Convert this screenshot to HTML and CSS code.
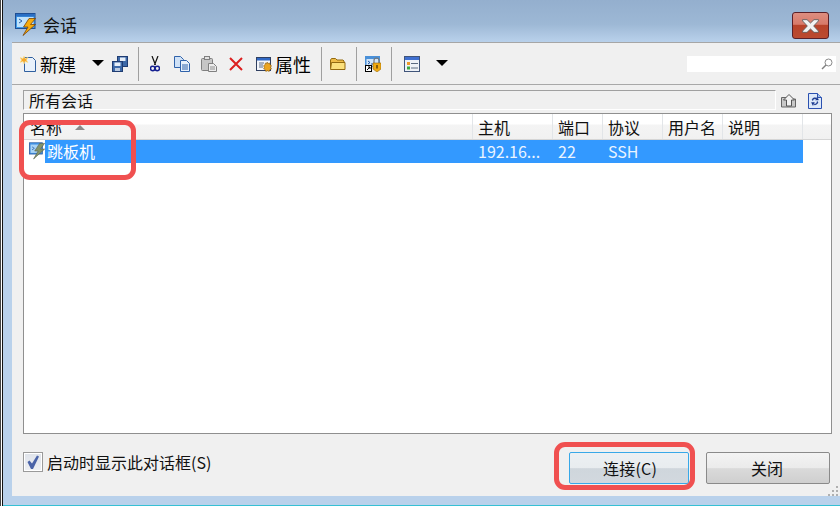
FILE: index.html
```html
<!DOCTYPE html>
<html lang="zh-CN">
<head>
<meta charset="utf-8">
<title>会话</title>
<link rel="stylesheet" href="styles.css">
</head>
<body>
<svg class="defs" width="0" height="0" aria-hidden="true">
  <defs>
    <symbol id="term" viewBox="0 0 21 23">
      <rect x="0.5" y="0.5" width="19.500" height="15" fill="#3f9be8" stroke="#1f4f94"/>
      <rect x="1" y="1" width="18.500" height="2.500" fill="#2a6fc4"/>
      <rect x="2" y="4" width="16.500" height="10" fill="#bfe2fb"/>
      <path d="M4 6l3 2-3 2" fill="none" stroke="#2a5fa8"/>
      <path d="M20.500 5.500H14L8.500 14H13L8 22.500 20.500 11.500H15.500z" fill="#f6ab0c" stroke="#7a4204" stroke-width=".8"/>
    </symbol>
    <symbol id="term-sel" viewBox="0 0 21 23">
      <rect x="0.5" y="0.5" width="17" height="15" fill="#3f8fe0" stroke="#2a5a9c"/>
      <rect x="2" y="3" width="14" height="11" fill="#a9d4f6"/>
      <path d="M4 6l3 2-3 2" fill="none" stroke="#2a5fa8"/>
      <path d="M20.500 1.500H14L7.500 11.500H12L6 22 20.500 9H15z" fill="#84946a" stroke="#55604a" stroke-width=".8"/>
    </symbol>
  </defs>
</svg>
<div class="screen">
  <div class="edge"></div>
  <div class="window">
    <header class="titlebar">
      <svg class="app-icon" width="21" height="23"><use href="#term"/></svg>
      <span class="title">会话</span>
      <button class="win-close" aria-label="关闭">
        <svg width="19" height="16" viewBox="0 0 18 14"><path d="M1.500 1h4.200L9 4.200 12.300 1h4.200v1.200L12 7l4.500 4.800V13h-4.200L9 9.800 5.700 13H1.500v-1.200L6 7 1.500 2.200z" fill="#f2f2f2" stroke="#5a5a5a" stroke-width=".8"/></svg>
      </button>
    </header>
    <main class="client">
      <div class="toolbar">
        <svg class="ico i-new" width="16" height="16" viewBox="0 0 16 16"><path d="M4.500 1.500h8l3 3v11h-11z" fill="#e8f1fb" stroke="#2f5f9f"/><path d="M4 0l1 2.500L8 1.500 6.500 4 8 6.500 5 5.500 4 8 3 5.500 0 6.500 1.500 4 0 1.500l3 1z" fill="#f7a82a" stroke="#fbe79a" stroke-width=".6"/></svg>
        <span class="tb-label">新建</span>
        <span class="tb-arrow a-new"></span>
        <svg class="ico i-save" width="16" height="16" viewBox="0 0 16 16"><rect x="5.500" y=".5" width="10" height="10" fill="#3d69a8" stroke="#1f3c72"/><rect x="8" y="1.500" width="5.500" height="3.500" fill="#e6eef8"/><rect x=".5" y="5.500" width="10" height="10" fill="#3d69a8" stroke="#1f3c72"/><rect x="2.500" y="6.500" width="6" height="3.500" fill="#e6eef8"/><rect x="3" y="12" width="5" height="3" fill="#b9c9e0"/></svg>
        <span class="tb-sep s-1"></span>
        <svg class="ico i-cut" width="10" height="16" viewBox="0 0 10 16"><path d="M2 0l3.500 9M8 0L4.500 9" stroke="#111" stroke-width="1.200" fill="none"/><circle cx="2.700" cy="12.500" r="2.200" fill="none" stroke="#141f90" stroke-width="1.500"/><circle cx="7.300" cy="12.500" r="2.200" fill="none" stroke="#141f90" stroke-width="1.500"/></svg>
        <svg class="ico i-copy" width="16" height="16" viewBox="0 0 16 16"><path d="M.5.500h6l3 3v8h-9z" fill="#cfe1f6" stroke="#2f62aa"/><path d="M6.500 4.500h6l3 3v8h-9z" fill="#e8f1fb" stroke="#2f62aa"/><path d="M8 9h6M8 11h6M8 13h6" stroke="#2f62aa"/></svg>
        <svg class="ico i-paste" width="16" height="16" viewBox="0 0 16 16"><rect x=".5" y="2.500" width="11" height="12" rx="1" fill="#c6c6c6" stroke="#808080"/><rect x="3.500" y=".5" width="5" height="3" fill="#e2e2e2" stroke="#808080"/><path d="M7.500 7.500h5l3 3v5h-8z" fill="#ededed" stroke="#808080"/><path d="M9 11h5M9 13h5" stroke="#909090"/></svg>
        <svg class="ico i-del" width="14" height="14" viewBox="0 0 14 14"><path d="M1 1l12 12M13 1L1 13" stroke="#dc1f1f" stroke-width="2"/></svg>
        <svg class="ico i-prop" width="16" height="16" viewBox="0 0 16 16"><rect x=".5" y="1.500" width="14" height="13" fill="#f4f6fa" stroke="#2f3f60"/><rect x="1" y="2" width="13" height="2.500" fill="#3068c4"/><path d="M3 7h5M3 9h4M3 11h4" stroke="#5b6a85"/><path d="M11 6l1 1.500 1.800-.5.300 1.800 1.400.9-.9 1.600.9 1.600-1.700.7-.6 1.800-1.700-.7-1.700.7-.6-1.800-1.600-.8.800-1.500-.800-1.600 1.500-.9.300-1.800 1.700.5z" fill="#eba420" stroke="#8a5a0c" stroke-width=".6"/></svg>
        <span class="tb-label l-prop">属性</span>
        <span class="tb-sep s-2"></span>
        <svg class="ico i-folder" width="16" height="14" viewBox="0 0 16 14"><path d="M.5 11V3l1-1.500h4L7 3h6l1 1v1.500" fill="#eebc48" stroke="#936a10"/><path d="M.5 12.500l1-7h13.500v7z" fill="#fbe07c" stroke="#936a10"/></svg>
        <span class="tb-sep s-3"></span>
        <svg class="ico i-lock" width="16" height="16" viewBox="0 0 16 16"><rect width="15" height="11" fill="#4a90d8"/><rect x="1.500" y="3" width="12" height="7" fill="#cfe4f8"/><path d="M3 5l2 1.500L3 8M6 8h2" stroke="#1f56a8" fill="none"/><rect x=".5" y="9.500" width="6" height="6" fill="#fff" stroke="#000"/><path d="M2 14l3-3M3 11h2v2" stroke="#000" fill="none"/><path d="M9 7V4.500a2.500 2.500 0 0 1 5 0V7" fill="none" stroke="#777" stroke-width="1.200"/><path d="M8 7h8v6l-4 3-4-3z" fill="#f0aa10" stroke="#9a6a08" stroke-width=".6"/><rect x="11.300" y="9" width="1.400" height="3.500" fill="#5a3a04"/></svg>
        <span class="tb-sep s-4"></span>
        <svg class="ico i-list" width="16" height="16" viewBox="0 0 16 16"><rect x=".5" y=".5" width="15" height="15" fill="#eef2f7" stroke="#40557a"/><rect x="1" y="1" width="14" height="3" fill="#3f6fd0"/><rect x="3" y="6" width="3" height="3" fill="#ef9a28"/><rect x="3" y="10.500" width="3" height="3" fill="#3ea83e"/><path d="M7 7.500h7M7 12h7" stroke="#5a6a80"/></svg>
        <span class="tb-arrow a-list"></span>
        <div class="search">
          <svg width="12" height="12" viewBox="0 0 12 12"><circle cx="7.500" cy="4.500" r="3.500" fill="none" stroke="#8a8a8a"/><path d="M5 7l-4 4" stroke="#808080" stroke-width="1.400"/></svg>
        </div>
      </div>
      <div class="pathrow">
        <div class="pathbar">所有会话</div>
        <svg class="ico i-up" width="16" height="14" viewBox="0 0 16 14"><path d="M.5 13V3.500h5l1 1.500h8v8z" fill="#c8c8c8" stroke="#666"/><path d="M8 .5l5.500 5.500h-3v6H5.500V6h-3z" fill="#f2f2f2" stroke="#555"/></svg>
        <svg class="ico i-refresh" width="14" height="16" viewBox="0 0 14 16"><path d="M.5.500h9l4 4v11H.5z" fill="#dde9f9" stroke="#2a50b0"/><path d="M9.500.500v4h4" fill="#a6c2ea" stroke="#2a50b0"/><path d="M4 7a3 3 0 0 1 5-1.500V4l1.500 3H7.500l1-.5A2 2 0 0 0 5 7.500zM10 9a3 3 0 0 1-5 2v1.500L3.500 9.500h3l-1 .7A2 2 0 0 0 9 8.500z" fill="#10308a" stroke="#10308a" stroke-width=".4"/></svg>
      </div>
      <section class="sessions">
        <div class="head">
          <div class="col c-name">名称<span class="sort"></span></div>
          <div class="col c-host">主机</div>
          <div class="col c-port">端口</div>
          <div class="col c-proto">协议</div>
          <div class="col c-user">用户名</div>
          <div class="col c-desc">说明</div>
        </div>
        <div class="row">
          <div class="name-cell">
            <svg class="row-icon" width="17" height="18" viewBox="0 0 21 23"><use href="#term-sel"/></svg>
            <span>跳板机</span>
          </div>
          <div class="cell c-host">192.16...</div>
          <div class="cell c-port">22</div>
          <div class="cell c-proto">SSH</div>
          <div class="cell c-user"></div>
          <div class="cell c-desc"></div>
        </div>
      </section>
      <footer class="footer">
        <label class="startup">
          <span class="check"><svg width="16" height="16" viewBox="0 0 16 16"><path d="M2.500 8l2-1.500 2.500 3L12 1.500l2 1L8 15H6z" fill="#4a63a8"/></svg></span>
          <span>启动时显示此对话框(S)</span>
        </label>
        <button class="btn btn-connect">连接(C)</button>
        <button class="btn btn-close">关闭</button>
        <svg class="grip" width="10" height="10" viewBox="0 0 10 10"><path d="M8 0h2v2H8zM4 4h2v2H4zM8 4h2v2H8zM0 8h2v2H0zM4 8h2v2H4zM8 8h2v2H8z" fill="#b0b0b0"/></svg>
      </footer>
    </main>
  </div>
  <div class="mark mark-row"></div>
  <div class="mark mark-btn"></div>
</div>
</body>
</html>
```
FILE: styles.css
```css
* { box-sizing: border-box; }
html, body { margin: 0; padding: 0; }
body {
  width: 840px;
  height: 506px;
  overflow: hidden;
  font: 16px "Noto Sans CJK SC", "Liberation Sans", sans-serif;
  color: #111;
}
.defs { position: absolute; }
.screen { position: relative; display: flex; width: 840px; height: 506px; }
.edge { width: 3px; background: #fff; border-left: 1px solid #444; border-right: 1px solid #111; }
.window {
  flex: 1;
  display: flex;
  flex-direction: column;
  background: linear-gradient(#94afce 0, #9db8d5 24px, #b9d1eb 42px, #b9d1eb 100%);
  border-bottom: 1px solid #35c0d4;
  padding: 0 0 9px 9px;
}
.titlebar { position: relative; height: 42px; flex: none; display: flex; align-items: flex-start; }
.app-icon { margin: 13px 0 0 3px; }
.title { margin: 13px 0 0 7px; font-size: 17px; line-height: 24px; }
.win-close {
  position: absolute;
  left: 780px;
  top: 12px;
  width: 37px;
  height: 27px;
  padding: 0;
  display: flex;
  align-items: center;
  justify-content: center;
  border: 1px solid #5a2028;
  border-radius: 3px;
  background: linear-gradient(#dd8e80 0, #d87a6a 45%, #b8432a 50%, #bb4a30 100%);
}
.client {
  flex: 1;
  display: flex;
  flex-direction: column;
  background: #f0f0f0;
  border-top: 1px solid #a6a6a6;
  min-height: 0;
}
.toolbar {
  position: relative;
  height: 42px;
  flex: none;
  display: flex;
  align-items: center;
  border-bottom: 1px solid #a8a8a8;
  padding-left: 8px;
}
.ico { flex: none; display: block; }
.tb-label { font-size: 18px; line-height: 24px; margin-left: 4px; color: #000; }
.tb-arrow {
  width: 0;
  height: 0;
  border-left: 6px solid transparent;
  border-right: 6px solid transparent;
  border-top: 6px solid #000;
  flex: none;
}
.a-new { margin: -2px 0 0 16px; }
.i-save { margin-left: 8px; }
.tb-sep { width: 1px; height: 34px; background: #a0a0a0; flex: none; }
.s-1 { margin-left: 10px; }
.i-cut { margin-left: 11px; }
.i-copy { margin-left: 14px; }
.i-paste { margin-left: 11px; }
.i-del { margin-left: 12px; }
.i-prop { margin-left: 13px; }
.l-prop { margin-left: 3px; }
.s-2 { margin-left: 10px; }
.i-folder { margin-left: 8px; }
.s-3 { margin-left: 10px; }
.i-lock { margin-left: 8px; }
.s-4 { margin-left: 10px; }
.i-list { margin-left: 12px; }
.a-list { margin: -2px 0 0 16px; }
.search {
  margin-left: auto;
  margin-right: 4px;
  width: 149px;
  height: 16px;
  background: #fff;
  display: flex;
  align-items: center;
  justify-content: flex-end;
  padding-right: 3px;
}
.pathrow { flex: none; display: flex; align-items: flex-start; margin: 5px 0 0 11px; height: 23px; }
.pathbar {
  width: 753px;
  height: 20px;
  border-top: 1px solid #a0a0a0;
  border-left: 1px solid #a0a0a0;
  border-right: 1px solid #fff;
  border-bottom: 1px solid #fff;
  font-size: 16px;
  line-height: 19px;
  padding-left: 5px;
  color: #111;
}
.i-up { margin: 4px 0 0 5px; }
.i-refresh { margin: 3px 0 0 11px; }
.sessions {
  flex: none;
  width: 809px;
  height: 321px;
  margin-left: 11px;
  background: #fff;
  border: 1px solid #8f8f8f;
}
.head {
  display: flex;
  height: 26px;
  width: 807px;
  background: linear-gradient(#fff 0, #fff 10px, #f4f4f4 11px, #f1f1f1 100%);
  border-bottom: 1px solid #d5d5d5;
}
.col {
  height: 25px;
  border-right: 1px solid #e2e5e8;
  padding-left: 5px;
  line-height: 27px;
  color: #111;
  white-space: nowrap;
}
.c-name { width: 449px; position: relative; padding-left: 6px; }
.c-host { width: 80px; }
.c-port { width: 50px; }
.c-proto { width: 60px; }
.c-user { width: 60px; }
.c-desc { width: 80px; }
.sort {
  position: absolute;
  left: 51px;
  top: 11px;
  border-left: 5px solid transparent;
  border-right: 5px solid transparent;
  border-bottom: 5px solid #8a8a8a;
}
.row { display: flex; height: 23px; width: 779px; color: #eaf4ff; line-height: 23px; }
.name-cell { width: 449px; display: flex; align-items: center; }
.row-icon { flex: none; margin: -2px 0 0 5px; width: 16px; }
.name-cell span { flex: 1; background: #3399ff; height: 23px; padding-left: 2px; color: #fff; }
.cell { background: #3399ff; padding-left: 5px; border: 0; white-space: nowrap; }
.row .c-desc { width: 80px; }
.footer { position: relative; flex: 1; display: flex; align-items: flex-start; padding: 18px 10px 0 11px; }
.startup { display: flex; align-items: center; height: 20px; line-height: 20px; }
.check {
  width: 20px;
  height: 20px;
  margin-right: 4px;
  display: flex;
  align-items: center;
  justify-content: center;
  background: linear-gradient(#dfe3ea, #eef0f4);
  border: 1px solid #9a9a9a;
  box-shadow: inset 0 0 0 1px #fff;
}
.btn {
  height: 32px;
  font: 16px "Noto Sans CJK SC", "Liberation Sans", sans-serif;
  color: #111;
  padding: 0;
  border-radius: 2px;
}
.btn-connect {
  width: 120px;
  margin-left: auto;
  border: 1px solid #38a8e8;
  background: linear-gradient(#ecf0f3 0, #e8ecef 50%, #cfd6dc 52%, #d2d8de 100%);
  padding-left: 2px;
  letter-spacing: .2px;
}
.btn-close {
  width: 124px;
  margin-left: 17px;
  padding-right: 2px;
  border: 1px solid #8a8a8a;
  background: linear-gradient(#f3f3f3 0, #ebebeb 50%, #dadada 52%, #cfcfcf 100%);
}
.grip { position: absolute; right: 2px; bottom: 0; }
.mark {
  position: absolute;
  border: 5px solid #f05050;
  border-radius: 11px;
  pointer-events: none;
}
.mark-row { left: 19px; top: 120px; width: 117px; height: 60px; }
.mark-btn { left: 554px; top: 442px; width: 141px; height: 48px; }
```
